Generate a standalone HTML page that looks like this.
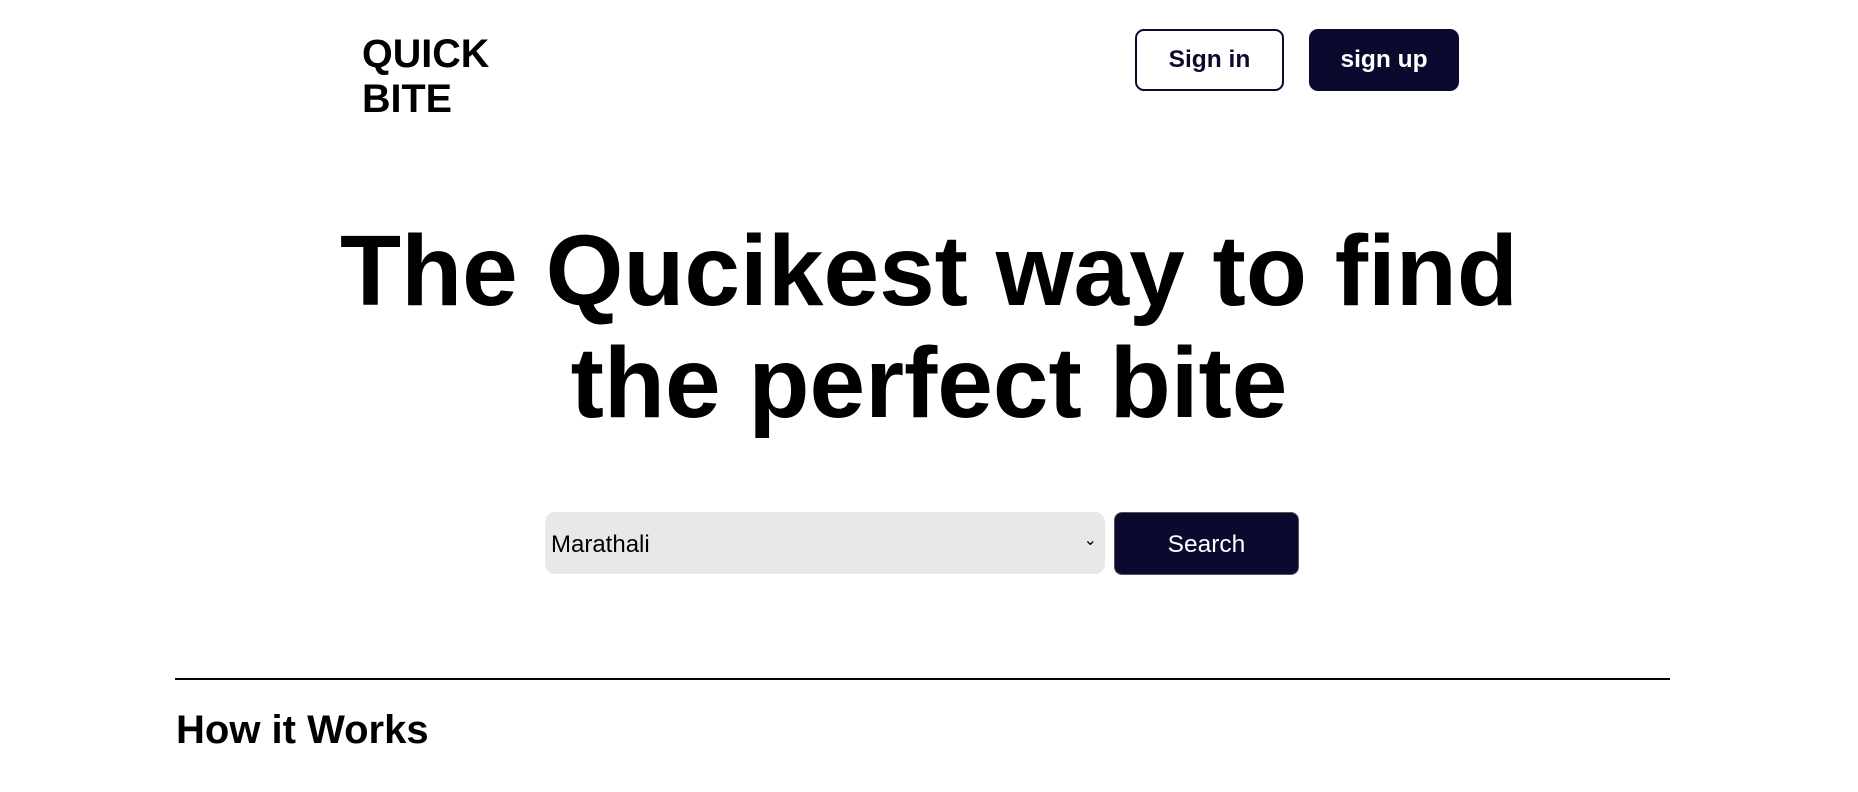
<!DOCTYPE html>
<html><head><meta charset="utf-8"><style>
*{margin:0;padding:0;box-sizing:border-box}
body{width:1858px;height:792px;background:#fff;font-family:"Liberation Sans",Arial,sans-serif;color:#000;position:relative;overflow:hidden}
.logo{position:absolute;left:362px;top:32px;font-weight:bold;font-size:39.5px;line-height:45px}
.btn{position:absolute;top:29px;height:62px;width:149px;border-radius:9px;font-weight:bold;font-size:24.5px;display:flex;align-items:center;justify-content:center}
.in{left:1135px;border:2px solid #0b0a2e;color:#0b0a2e;background:#fff}
.up{left:1309px;background:#0b0a2e;color:#fff;width:150px}
h1{position:absolute;left:0;width:1858px;top:215px;text-align:center;font-size:100px;line-height:112px;font-weight:bold}
.sel{position:absolute;left:545px;top:512px;width:560px;height:62px;background:#e9e8e6;border-radius:10px;font-size:24px;padding-left:6px;padding-top:3px;display:flex;align-items:center}
.sel span.ch{position:absolute;right:8px;top:18px;font-size:16px}
.search{position:absolute;left:1114px;top:512px;width:185px;height:63px;background:#0b0a2e;color:#fff;border-radius:8px;font-size:24.5px;padding-top:2px;display:flex;align-items:center;justify-content:center;border:1px solid #555}
.hr{position:absolute;left:175px;top:678px;width:1495px;height:2px;background:#000}
h2{position:absolute;left:176px;top:708px;font-size:40px;font-weight:bold}
</style></head><body>
<div class="logo">QUICK<br>BITE</div>
<div class="btn in">Sign in</div>
<div class="btn up">sign up</div>
<h1>The Qucikest way to find<br>the perfect bite</h1>
<div class="sel">Marathali<span class="ch">&#8964;</span></div>
<div class="search">Search</div>
<div class="hr"></div>
<h2>How it Works</h2>
</body></html>
